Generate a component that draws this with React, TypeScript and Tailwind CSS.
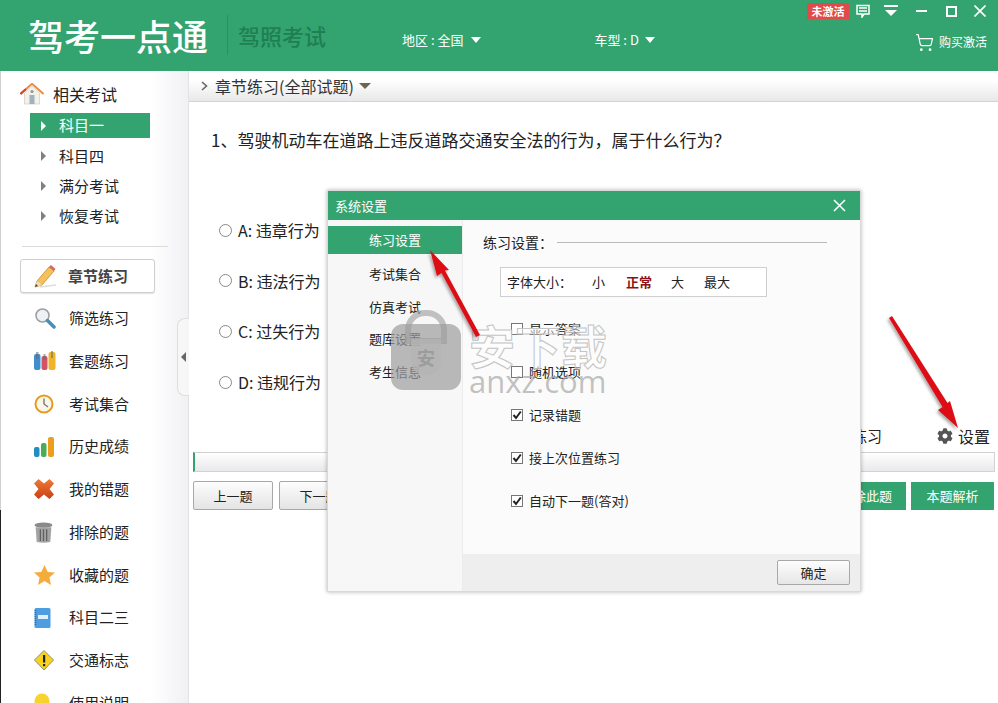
import React from "react";
import { FaCog } from "react-icons/fa";
import { ShoppingCart } from "lucide-react";

const Pencil = () => (
  <svg width="22" height="24" viewBox="0 0 22 24">
    <path d="M3 17 L15 3 L20 7 L8 21 L1 23 Z" fill="#f5c15c" stroke="#c9862a" strokeWidth="0.8" />
    <path d="M15 3 L17 1 L21.5 5 L20 7 Z" fill="#d9665a" />
    <path d="M1 23 L3 17 L8 21 Z" fill="#f3dfc0" />
    <path d="M1 23 L2 20 L4 22 Z" fill="#444" />
    <path d="M6 23 L22 21" stroke="#ddd" strokeWidth="1.5" />
  </svg>
);
const Search = () => (
  <svg width="22" height="22" viewBox="0 0 22 22">
    <circle cx="8.5" cy="8.5" r="6.5" fill="#eef2f5" stroke="#9aa0a5" strokeWidth="1.6" />
    <path d="M13.5 13.5 L20 20" stroke="#4b8db8" strokeWidth="3.5" strokeLinecap="round" />
  </svg>
);
const Books = () => (
  <svg width="22" height="20" viewBox="0 0 22 20">
    <rect x="0" y="3" width="6.5" height="16" rx="2" fill="#3f8fd0" />
    <rect x="7.5" y="5" width="6" height="14" rx="2" fill="#cf5468" />
    <rect x="14.5" y="1" width="7" height="18" rx="2" fill="#f0b429" />
    <path d="M2 1 h2.5 v7 h-2.5z M9.5 3 h2 v6 h-2z M17 0 h2 v7 h-2z" fill="#5b6b74" opacity="0.55" />
  </svg>
);
const Clock = () => (
  <svg width="20" height="20" viewBox="0 0 20 20">
    <circle cx="10" cy="10" r="8.5" fill="#faf6ea" stroke="#e89b23" strokeWidth="2" />
    <path d="M10 4.5 V10 L14 13" fill="none" stroke="#777" strokeWidth="1.4" />
  </svg>
);
const Bars = () => (
  <svg width="20" height="20" viewBox="0 0 20 20">
    <rect x="0" y="10" width="5.5" height="10" rx="2" fill="#1e8fc0" />
    <rect x="7" y="6" width="5.5" height="14" rx="2" fill="#49ad54" />
    <rect x="14" y="0" width="6" height="20" rx="2" fill="#ed9d1f" />
  </svg>
);
const Cross = () => (
  <svg width="20" height="20" viewBox="0 0 20 20">
    <defs>
      <linearGradient id="crossFill" x1="0" y1="0" x2="0" y2="1">
        <stop offset="0" stopColor="#ee7a35" />
        <stop offset="1" stopColor="#c93f14" />
      </linearGradient>
    </defs>
    <path d="M4.5 0 L10 4.5 L15.5 0 L20 4.5 L15.5 10 L20 15.5 L15.5 20 L10 15.5 L4.5 20 L0 15.5 L4.5 10 L0 4.5 Z" fill="url(#crossFill)" />
  </svg>
);
const Trash = () => (
  <svg width="19" height="21" viewBox="0 0 18 20">
    <ellipse cx="9" cy="3" rx="8.5" ry="2.5" fill="#8a8a8a" />
    <path d="M1.5 5 H16.5 L15.5 19 Q9 20.5 2.5 19 Z" fill="#a3a3a3" />
    <path d="M6 7 V18 M9 7 V18 M12 7 V18" stroke="#5f5f5f" strokeWidth="1.2" />
  </svg>
);
const Star = () => (
  <svg width="21" height="20" viewBox="0 0 21 20">
    <path d="M10.5 0 L13.7 7 L21 7.6 L15.4 12.4 L17 20 L10.5 16 L4 20 L5.6 12.4 L0 7.6 L7.3 7 Z" fill="#f4ac3c" />
  </svg>
);
const Notebook = () => (
  <svg width="17" height="20" viewBox="0 0 17 20">
    <rect x="0.5" y="0" width="16" height="20" rx="1.5" fill="#4d9de0" />
    <rect x="4" y="7" width="10" height="4" fill="#e2f0fb" />
    <path d="M1.5 2 V18" stroke="#2c6da8" strokeWidth="1.5" strokeDasharray="1 1" />
  </svg>
);
const Warning = () => (
  <svg width="20" height="21" viewBox="0 0 20 21">
    <path d="M10 0.5 L19.5 10 L10 20 L0.5 10 Z" fill="#f7d21e" stroke="#8f8f7a" strokeWidth="1" strokeLinejoin="round" />
    <rect x="9" y="5" width="2.2" height="7.5" fill="#222" />
    <rect x="9" y="14" width="2.2" height="2.2" fill="#222" />
  </svg>
);
const Bulb = () => (
  <svg width="16" height="20" viewBox="0 0 16 20">
    <circle cx="8" cy="8" r="7.5" fill="#f6d32d" />
  </svg>
);
const House = () => (
  <svg width="24" height="22" viewBox="0 0 24 22">
    <path d="M4.5 10 V21 H19.5 V10 L12 3 Z" fill="#f3f1ea" stroke="#c8c4b8" strokeWidth="0.6" />
    <path d="M0.5 11 L12 0.8 L23.5 11" fill="none" stroke="#e98d4b" strokeWidth="2" />
    <path d="M0.5 11 L6 6" stroke="#d9452c" strokeWidth="2" />
    <rect x="9.5" y="12" width="5" height="9" fill="#9fb2bd" />
    <circle cx="12" cy="8.5" r="1.6" fill="#8d99a0" />
  </svg>
);

const subjects = ["科目一", "科目四", "满分考试", "恢复考试"];
const menus: [string, React.ReactNode][] = [
  ["筛选练习", <Search />],
  ["套题练习", <Books />],
  ["考试集合", <Clock />],
  ["历史成绩", <Bars />],
  ["我的错题", <Cross />],
  ["排除的题", <Trash />],
  ["收藏的题", <Star />],
  ["科目二三", <Notebook />],
  ["交通标志", <Warning />],
  ["使用说明", <Bulb />],
];
const options = ["A: 违章行为", "B: 违法行为", "C: 过失行为", "D: 违规行为"];
const tabs = ["练习设置", "考试集合", "仿真考试", "题库设置", "考生信息"];
const checks: [string, boolean][] = [
  ["显示答案", false],
  ["随机选项", false],
  ["记录错题", true],
  ["接上次位置练习", true],
  ["自动下一题(答对)", true],
];

const Caret = () => (
  <span className="inline-block w-0 h-0 border-x-[5px] border-x-transparent border-t-[6px] border-t-white" />
);

const Arrows = () => (
  <svg className="absolute left-0 top-0 pointer-events-none" width="998" height="703" viewBox="0 0 998 703">
    <defs>
      <filter id="sh" x="-30%" y="-30%" width="160%" height="160%">
        <feDropShadow dx="-1.5" dy="2" stdDeviation="1.5" floodColor="#000" floodOpacity="0.35" />
      </filter>
    </defs>
    <g fill="#dd1015" filter="url(#sh)">
      <path d="M430 250 L449 270 L445 270.5 L480 335 L476 337 L441.5 273 L437 276 Z" />
      <path d="M958 428 L938 410 L942.5 407 L889 318 L892 316 L947.5 403 L950 401 Z" />
    </g>
  </svg>
);

const Watermark = () => (
  <div className="absolute left-[391px] top-[310px] flex gap-[8px] pointer-events-none">
    <div className="relative w-[70px] h-[80px]">
      <div className="absolute left-[14px] top-0 w-[42px] h-[34px] rounded-t-[20px] border-[6px] border-[#a8a8a8]/70" />
      <div className="absolute left-0 top-[14px] w-[70px] h-[66px] rounded-[12px] bg-[#9c9c9c]/70 flex items-center justify-center">
        <span className="w-[30px] h-[36px] rounded-b-[14px] bg-[#b4b4b4]/80 text-[#9c9c9c] text-[18px] font-bold flex items-center justify-center">
          安
        </span>
      </div>
    </div>
    <div className="flex flex-col pt-[12px]">
      <div className="text-[46px] leading-[44px] font-bold text-white/50 [-webkit-text-stroke:1px_#c4c4c4] whitespace-nowrap">
        安下载
      </div>
      <div className="text-[31px] leading-[30px] text-[#a8a8a8]/70 font-['Open_Sans',sans-serif] whitespace-nowrap">
        anxz.com
      </div>
    </div>
  </div>
);

const Dialog = () => (
  <div className="absolute left-[327px] top-[190px] w-[534px] h-[402px] flex flex-col bg-white border border-[#d9d9d9] shadow-[0_0_4px_rgba(0,0,0,0.3)]">
    <div className="h-[29px] shrink-0 bg-[#33a46f] flex items-center justify-between pl-[7px] pr-[8px] text-white text-[13px]">
      <span>系统设置</span>
      <svg width="13" height="13" viewBox="0 0 13 13" className="mr-[6px]">
        <path d="M1 1 L12 12 M12 1 L1 12" stroke="#fff" strokeWidth="1.6" />
      </svg>
    </div>
    <div className="flex flex-1 min-h-0">
      <div className="w-[135px] shrink-0 bg-[#f7f7f7] pt-[6px] border-r border-[#ececec] flex flex-col">
        {tabs.map((t, i) => (
          <div
            key={t}
            className={
              i === 0
                ? "h-[28px] mb-[4.7px] bg-[#33a46f] text-white text-[13px] flex items-center pl-[41px]"
                : "h-[28px] mb-[4.7px] text-[#222] text-[13px] flex items-center pl-[41px] pt-[2px]"
            }
          >
            {t}
          </div>
        ))}
      </div>
      <div className="flex-1 flex flex-col bg-[#fbfbfb] min-w-0">
        <div className="flex-1 pl-[20px] pt-[13px]">
          <div className="flex items-center text-[14px] text-[#222] h-[19px]">
            <span>练习设置：</span>
            <span className="w-[270px] h-px bg-[#b9b9b9] ml-[4px]" />
          </div>
          <div className="mt-[15px] ml-[17px] w-[267px] h-[30px] border border-[#cfcfcf] bg-white flex items-center text-[13px] text-[#222] pl-[6px]">
            <span className="w-[85px]">字体大小：</span>
            <span className="w-[34px]">小</span>
            <span className="w-[45px] text-[#8b1212] font-bold">正常</span>
            <span className="w-[33px]">大</span>
            <span>最大</span>
          </div>
          <div className="mt-[21.5px] ml-[28px] flex flex-col gap-[23px]">
            {checks.map(([label, on]) => (
              <div key={label} className="flex items-center gap-[6px] h-[20px] text-[13px] text-[#222]">
                <span className="w-[12px] h-[12px] border border-[#777] bg-white flex items-center justify-center">
                  {on && (
                    <svg width="10" height="10" viewBox="0 0 10 10">
                      <path d="M1.5 5 L4 8 L8.8 1.5" fill="none" stroke="#222" strokeWidth="2" />
                    </svg>
                  )}
                </span>
                {label}
              </div>
            ))}
          </div>
        </div>
        <div className="h-[37px] shrink-0 bg-[#eeeeee] flex items-center justify-end pr-[10px]">
          <button className="w-[73px] h-[25px] rounded-[2px] border border-[#a8a8a8] bg-gradient-to-b from-[#fdfdfd] to-[#e6e6e6] text-[13px] text-[#222]">
            确定
          </button>
        </div>
      </div>
    </div>
  </div>
);

export default function App() {
  return (
    <div className="relative w-[998px] h-[703px] overflow-hidden bg-white font-['Noto_Sans_CJK_SC','Liberation_Sans',sans-serif]">
      {/* title bar */}
      <div className="relative h-[71px] bg-[#33a46f] flex items-start pl-[28px] text-white">
        <div className="text-[36px] leading-[71px] h-[71px] w-[181px] whitespace-nowrap font-medium">驾考一点通</div>
        <div className="w-px h-[40px] bg-[#2b9060] ml-[18px] mt-[15px]" />
        <div className="text-[22px] leading-[71px] text-[#1f7f53] ml-[10px] w-[87px] whitespace-nowrap font-medium -mt-[0.5px]">驾照考试</div>
        <div className="flex items-center gap-[8px] ml-[77px] mt-[31px] text-[13px] h-[18px]">
          地区 : 全国 <Caret />
        </div>
        <div className="flex items-center gap-[6px] ml-[113px] mt-[31px] text-[13px] h-[18px]">
          车型 : D <Caret />
        </div>
        <div className="absolute right-[8px] top-[3px] flex flex-col items-end">
          <div className="flex items-center h-[16px]">
            <span className="w-[42px] h-[16px] bg-[#e14a48] text-[11px] leading-[16px] font-bold text-center whitespace-nowrap">未激活</span>
            <svg width="14" height="14" viewBox="0 0 14 14" className="ml-[7px]">
              <path d="M1 1.5 H13 V10 H8 L6 13 V10 H1 Z M3 4 H11 M3 7 H11" fill="none" stroke="#fff" strokeWidth="1.5" />
            </svg>
            <svg width="14" height="12" viewBox="0 0 14 12" className="ml-[14px]">
              <path d="M0 1 H14 M0 1 H14" stroke="#fff" strokeWidth="2" />
              <path d="M1 5 H13 L7 11 Z" fill="#fff" />
            </svg>
            <span className="w-[11px] h-[2px] bg-white ml-[18px]" />
            <span className="w-[11px] h-[11px] border-2 border-white ml-[19px]" />
            <svg width="12" height="12" viewBox="0 0 12 12" className="ml-[17px] mr-[4px]">
              <path d="M0.5 0.5 L11.5 11.5 M11.5 0.5 L0.5 11.5" stroke="#fff" strokeWidth="1.6" />
            </svg>
          </div>
          <div className="flex items-center gap-[5px] mt-[14px] text-[12px] pr-[3px] h-[18px]">
            <ShoppingCart size={19} strokeWidth={1.5} />
            购买激活
          </div>
        </div>
      </div>

      <div className="flex h-[632px]">
        {/* sidebar */}
        <div className="relative w-[189px] shrink-0 border-l border-[#d0d0d0] border-r-[#e2e2e2] border-r bg-gradient-to-r from-white from-[80%] to-[#f1f1f4] pl-[19px] overflow-hidden">
          <div className="flex items-center h-[24px] mt-[11px]">
            <House />
            <span className="ml-[9px] text-[16px] text-[#222]">相关考试</span>
          </div>
          <div className="mt-[7px] ml-[10px] w-[120px] flex flex-col gap-[5px]">
            {subjects.map((s, i) => (
              <div
                key={s}
                className={
                  i === 0
                    ? "h-[25px] bg-[#33a46f] text-white flex items-center pl-[11px] text-[15px]"
                    : "h-[25px] text-[#222] flex items-center pl-[11px] text-[15px] pt-[1px]"
                }
              >
                <span
                  className={
                    i === 0
                      ? "w-0 h-0 border-y-[5px] border-y-transparent border-l-[5px] border-l-white mr-[13px]"
                      : "w-0 h-0 border-y-[5px] border-y-transparent border-l-[5px] border-l-[#808080] mr-[13px]"
                  }
                />
                {s}
              </div>
            ))}
          </div>
          <div className="w-[146px] h-px bg-[#dcdcdc] ml-[2px] mt-[18px]" />
          <div className="w-[135px] h-[34px] mt-[12px] rounded-[3px] border border-[#cfcfcf] bg-white shadow-[0_1px_1px_rgba(0,0,0,0.12)] flex items-center pl-[13px]">
            <Pencil />
            <span className="ml-[12px] text-[15px] font-bold text-[#444]">章节练习</span>
          </div>
          <div className="mt-[4px]">
            {menus.map(([label, icon]) => (
              <div key={label} className="h-[42.75px] flex items-center">
                <span className="w-[49px] pl-[14px] flex justify-start">{icon}</span>
                <span className="text-[15px] text-[#222]">{label}</span>
              </div>
            ))}
          </div>
        </div>

        {/* main */}
        <div className="relative flex-1 flex flex-col min-w-0">
          <div className="absolute -left-[12px] top-[247px] w-[12px] h-[78px] rounded-l-[8px] border border-r-0 border-[#dedede] bg-[#f7f7f8] flex items-center justify-center">
            <span className="w-0 h-0 border-y-[5px] border-y-transparent border-r-[5px] border-r-[#666]" />
          </div>
          <div className="h-[31px] shrink-0 bg-gradient-to-b from-white from-[30%] to-[#e8e8ea] border-b border-[#d4d4d4] flex items-center pl-[12px] text-[16px] text-[#333]">
            <svg width="7" height="10" viewBox="0 0 7 10">
              <path d="M1 1 L5.5 5 L1 9" fill="none" stroke="#666" strokeWidth="1.6" />
            </svg>
            <span className="ml-[7px]">章节练习(全部试题)</span>
            <span className="ml-[5px] w-0 h-0 border-x-[6px] border-x-transparent border-t-[6px] border-t-[#6a6650]" />
          </div>
          <div className="pl-[22px] mt-[26px] text-[17px] leading-[24px] text-[#222] whitespace-nowrap">
            1、驾驶机动车在道路上违反道路交通安全法的行为，属于什么行为？
          </div>
          <div className="pl-[30px] mt-[68px] flex flex-col gap-[30.7px]">
            {options.map((o) => (
              <label key={o} className="flex items-center h-[20px] text-[16px] text-[#222]">
                <span className="w-[13px] h-[13px] rounded-full border border-[#888] bg-white mr-[6px]" />
                {o}
              </label>
            ))}
          </div>
          <div className="flex justify-end items-center h-[20px] mt-[34px] pr-[8px] text-[15px] text-[#222]">
            <span className="mr-[55px]">顺序练习</span>
            <FaCog size={16} color="#555" />
            <span className="ml-[5px] text-[16px]">设置</span>
          </div>
          <div className="ml-[4px] mr-[3px] h-[20px] mt-[6px] border border-[#d2d2d2] border-l-[2px] border-l-[#33a46f] bg-gradient-to-b from-white to-[#e9e9ec]" />
          <div className="flex items-center h-[29px] mt-[9px] pl-[4px] pr-[4px] text-[13px]">
            <button className="w-[80px] h-[29px] rounded-[2px] border border-[#a8a8a8] bg-gradient-to-b from-[#fdfdfd] to-[#e4e4e4] text-[#222]">上一题</button>
            <button className="ml-[6px] w-[80px] h-[29px] rounded-[2px] border border-[#a8a8a8] bg-gradient-to-b from-[#fdfdfd] to-[#e4e4e4] text-[#222]">下一题</button>
            <button className="ml-auto w-[80px] h-[28px] bg-[#33a46f] text-white">排除此题</button>
            <button className="ml-[5px] w-[83px] h-[28px] bg-[#33a46f] text-white">本题解析</button>
          </div>
        </div>
      </div>

      <div className="absolute left-0 top-[510px] w-px h-[193px] bg-[#222]" />
      <Dialog />
      <Watermark />
      <Arrows />
    </div>
  );
}
